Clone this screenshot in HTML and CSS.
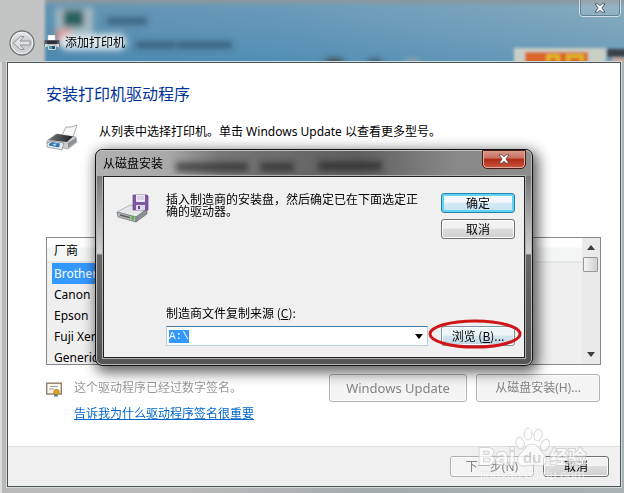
FILE: index.html
```
<!DOCTYPE html>
<html lang="zh-CN">
<head>
  <meta charset="UTF-8" />
  <meta name="viewport" content="width=device-width, initial-scale=1.0" />
  <title>添加打印机</title>
  <link rel="stylesheet" href="styles.css">
</head>
<body>
  <div class="window">
    <header class="titlebar">
      <svg class="glass" viewBox="0 0 624 62" preserveAspectRatio="none" aria-hidden="true">
        <defs>
          <linearGradient id="sky" x1="0" y1="0" x2="1" y2="0">
            <stop offset="0" stop-color="#548cb0" />
            <stop offset=".45" stop-color="#5f98bb" />
            <stop offset="1" stop-color="#89aec2" />
          </linearGradient>
          <linearGradient id="depth" x1="0" y1="0" x2="0" y2="1">
            <stop offset="0" stop-color="#8e9699" />
            <stop offset=".12" stop-color="#7ea0b4" stop-opacity=".3" />
            <stop offset="1" stop-color="#3c80ac" stop-opacity=".4" />
          </linearGradient>
          <filter id="soft" filterUnits="userSpaceOnUse" x="-20" y="-20" width="664" height="110"><feGaussianBlur stdDeviation="3" /></filter>
          <filter id="soft2" filterUnits="userSpaceOnUse" x="-20" y="-20" width="664" height="110"><feGaussianBlur stdDeviation="1.6" /></filter>
        </defs>
        <rect width="624" height="62" fill="url(#sky)" />
        <rect width="624" height="62" fill="url(#depth)" />
        <rect x="-10" y="-8" width="55" height="80" fill="#c3c4c4" filter="url(#soft2)" />
        <g filter="url(#soft)">
          <rect x="56" y="8" width="37" height="25" fill="#a9bcc4" />
          <rect x="63" y="10" width="21" height="17" fill="#28605f" />
          <rect x="56" y="30" width="16" height="14" fill="#e28d84" />
          <rect x="60" y="34" width="66" height="16" rx="7" fill="#dde8ee" />
          <path d="M107 21h40M136 45h40M178 45h54" stroke="#26475e" stroke-width="7" opacity=".65" />
          <ellipse cx="334" cy="62" rx="10" ry="4" fill="#42464a" />
          <ellipse cx="375" cy="63" rx="8" ry="4" fill="#3a5260" />
          <ellipse cx="412" cy="63" rx="8" ry="4" fill="#a0a8a8" />
        </g>
        <g filter="url(#soft2)">
          <rect x="514" y="48" width="92" height="20" fill="#c9cfc5" />
          <rect x="525" y="52" width="63" height="16" fill="#d9662c" />
          <path d="M548 62v-6h10v6M568 62v-6h14v6" fill="none" stroke="#e0b52c" stroke-width="4" />
          <rect x="607" y="49" width="20" height="8" fill="#394249" />
          <rect x="612" y="58" width="14" height="8" fill="#cfa99a" />
        </g>
      </svg>
      <button class="back" aria-label="返回">
        <svg viewBox="0 0 26 26" width="26" height="26">
          <defs>
            <linearGradient id="orb" x1="0" y1="0" x2="0" y2="1">
              <stop offset="0" stop-color="#e8e9ea" /><stop offset=".5" stop-color="#c4c6c8" /><stop offset="1" stop-color="#d6d8da" />
            </linearGradient>
          </defs>
          <circle cx="13" cy="13" r="12" fill="url(#orb)" stroke="#6f7477" stroke-width="1.3" />
          <circle cx="13" cy="13" r="10.8" fill="none" stroke="#f1f2f3" />
          <path d="M4.5 13l7-6.500h3.500l-4 4.500h10v4h-10l4 4.500h-3.500z" fill="#dfe1e3" stroke="#909598" stroke-width="1" />
        </svg>
      </button>
      <svg class="title-icon" viewBox="0 0 16 16" width="16" height="16" aria-hidden="true">
        <path d="M4 0h7v6H4z" fill="#fff" stroke="#cbd0d3" stroke-width=".6" />
        <rect x=".5" y="5" width="15" height="7" rx="1" fill="#585c60" />
        <path d="M1 9h14v3H1z" fill="#d5d8da" />
        <path d="M3 6h10v3H3z" fill="#303438" />
        <path d="M4 10h8v5H4z" fill="#fff" stroke="#70777b" stroke-width=".6" />
        <path d="M5 11h4v3H5z" fill="#3f9fbb" />
        <path d="M8 11h3v3H8z" fill="#235674" />
      </svg>
      <h1 class="title">添加打印机</h1>
      <button class="close" aria-label="关闭">
        <svg viewBox="0 0 12 10" width="12" height="10"><path d="M1 .8h3.200L6 2.800 7.800.8H11L7.900 5 11 9.200H7.800L6 7.200l-1.800 2H1L4.100 5z" fill="#fff" stroke="#4c5967" stroke-width="1" /></svg>
      </button>
    </header>

    <div class="client">
      <main class="page">
        <h2 class="heading">安装打印机驱动程序</h2>
        <div class="intro">
          <svg viewBox="0 0 32 28" width="32" height="28" aria-hidden="true">
            <defs>
              <linearGradient id="lid" x1="0" y1="0" x2="1" y2="0"><stop offset="0" stop-color="#77797b" /><stop offset="1" stop-color="#1d1f21" /></linearGradient>
            </defs>
            <path d="M16 11L20 3q5 1 11-2l-4 12-5 3z" fill="#f7f7f7" stroke="#898989" stroke-width=".7" />
            <path d="M1 17l9-7 20 3 1 5-9 7L1 20z" fill="#c9cbcc" stroke="#88898a" stroke-width=".6" />
            <path d="M2 16l9-6 16 2.500-6 5.500z" fill="url(#lid)" />
            <path d="M22 19l8-5v4l-8 6z" fill="#8c8f91" />
            <path d="M1 19l5-2 12 2-2 7-15-3z" fill="#e7e9ea" stroke="#75797c" stroke-width=".6" />
            <path d="M3 20l3-2 8 1.500-1 4-10-2z" fill="#2f75b7" />
            <path d="M6 20l5-.5-2 2.500z" fill="#a9dded" />
          </svg>
          <p>从列表中选择打印机。单击 Windows Update 以查看更多型号。</p>
        </div>

        <div class="list">
          <table class="makers">
            <thead><tr><th>厂商</th></tr></thead>
            <tbody>
              <tr class="selected"><td>Brother</td></tr>
              <tr><td>Canon</td></tr>
              <tr><td>Epson</td></tr>
              <tr><td>Fuji Xerox</td></tr>
              <tr><td>Generic</td></tr>
            </tbody>
          </table>
          <div class="scrollbar">
            <button class="arrow" aria-label="向上滚动"><svg viewBox="0 0 8 5" width="8" height="5"><path d="M4 0l4 5H0z" fill="#3b3d3f" /></svg></button>
            <div class="thumb"></div>
            <button class="arrow arrow-down" aria-label="向下滚动"><svg viewBox="0 0 8 5" width="8" height="5"><path d="M4 5l4-5H0z" fill="#3b3d3f" /></svg></button>
          </div>
        </div>

        <div class="signed">
          <svg class="cert" viewBox="0 0 16 15" width="16" height="15" aria-hidden="true">
            <rect x=".7" y="1.200" width="14.600" height="10.800" fill="#fbf8ee" stroke="#8f7d67" stroke-width="1.400" />
            <path d="M4 4.500h8M3 7h5" stroke="#9fa4aa" stroke-width="1" />
            <path d="M9 11l-1 4 2-1 2 1-1-4z" fill="#34698e" />
            <circle cx="10.500" cy="10" r="2.700" fill="#e2a51e" stroke="#a87311" stroke-width=".7" />
          </svg>
          <div class="signed-text">
            <p>这个驱动程序已经过数字签名。</p>
            <a href="#">告诉我为什么驱动程序签名很重要</a>
          </div>
          <button class="btn wide" disabled>Windows Update</button>
          <button class="btn disk" disabled>从磁盘安装(H)...</button>
        </div>
      </main>

      <footer class="footer">
        <button class="btn next" disabled>下一步(N)</button>
        <button class="btn cancel">取消</button>
      </footer>
    </div>
  </div>

  <div class="dialog" role="dialog" aria-labelledby="dialogTitle">
    <div class="dialog-bar">
      <h2 class="dialog-title" id="dialogTitle">从磁盘安装</h2>
      <svg class="ghost" viewBox="0 0 240 20" aria-hidden="true">
        <path d="M8 13h72M92 13h34M150 12h64" stroke="#222" stroke-width="9" opacity=".65" filter="url(#soft)" />
      </svg>
      <button class="dialog-close" aria-label="关闭">
        <svg viewBox="0 0 12 10" width="12" height="10"><path d="M1 .8h3.200L6 2.800 7.800.8H11L7.900 5 11 9.200H7.800L6 7.200l-1.800 2H1L4.100 5z" fill="#fff" stroke="#5f3a38" stroke-width=".8" /></svg>
      </button>
    </div>
    <div class="dialog-body">
      <div class="prompt">
        <svg viewBox="0 0 34 30" width="34" height="30" aria-hidden="true">
          <path d="M1 19l13-7 17 4-11 8z" fill="#e6e7e8" stroke="#9c9fa1" stroke-width=".7" />
          <path d="M1 19l19 5v5L2 24z" fill="#b3b6b8" stroke="#707477" stroke-width=".7" />
          <path d="M20 24l11-8v5l-11 8z" fill="#8c9092" stroke="#707477" stroke-width=".7" />
          <path d="M4 22l10 2.600" stroke="#55595c" stroke-width="1.400" />
          <path d="M15.500 23l2.500.7v3.600l-2.500-.7z" fill="#55b52c" />
          <path d="M17 2h14l1 1v14H17z" fill="#8057a4" stroke="#65408c" stroke-width=".7" />
          <path d="M20 2h9v7h-9z" fill="#ece9f4" />
          <path d="M21 4h7M21 6h7" stroke="#b6b0c6" stroke-width=".7" />
          <path d="M20 12h9v5h-9z" fill="#ddd8e6" />
          <path d="M22 13h2v3h-2z" fill="#69478e" />
        </svg>
        <p>插入制造商的安装盘，然后确定已在下面选定正确的驱动器。</p>
        <div class="actions">
          <button class="btn small default">确定</button>
          <button class="btn small">取消</button>
        </div>
      </div>
      <div class="source">
        <div class="field">
          <label for="sourcePath">制造商文件复制来源 (<u>C</u>):</label>
          <div class="combo">
            <input class="path" id="sourcePath" type="text" value="A:\">
            <button class="drop" aria-label="展开"><svg viewBox="0 0 8 5" width="8" height="5"><path d="M0 0h8L4 5z" fill="#000" /></svg></button>
          </div>
        </div>
        <div class="browse">
          <button class="btn small hot">浏览 (<u>B</u>)...</button>
          <svg class="ring" viewBox="0 0 94 30" width="94" height="30" aria-hidden="true"><ellipse cx="47" cy="15" rx="45" ry="13" fill="none" stroke="#cf1518" stroke-width="3" /></svg>
        </div>
      </div>
    </div>
  </div>

  <svg class="watermark" viewBox="0 0 120 56" width="120" height="56" role="img" aria-label="Baidu 经验">
    <g fill="#fff" stroke="#c6c6c6" stroke-width="1">
      <ellipse cx="44" cy="18" rx="4" ry="6" transform="rotate(-15 44 18)" />
      <ellipse cx="52" cy="9" rx="4" ry="6" />
      <ellipse cx="62" cy="10" rx="4" ry="6" transform="rotate(12 62 10)" />
      <ellipse cx="69" cy="20" rx="4" ry="6" transform="rotate(25 69 20)" />
      <path d="M56 19c6 0 8 7 12 10 5 5 2 13-5 12-5-1-9-1-14 0-7 1-10-7-5-12 4-3 6-10 12-10z" />
    </g>
    <g class="mark-text">
      <text x="2" y="40" font-size="24">Bai</text>
      <text class="mark-du" x="47" y="38" font-size="15">du</text>
      <text x="74" y="39" font-size="18">经验</text>
      <text class="mark-url" x="4" y="54" font-size="13">jingyan.baidu.com</text>
    </g>
  </svg>
</body>
</html>
```

FILE: styles.css
```
* {
  box-sizing: border-box;
  margin: 0;
  padding: 0;
}
body {
  min-height: 100vh;
  position: relative;
  overflow: hidden;
  background: #c6c6c6;
  color: #000;
  font-family: 'Noto Sans', 'Noto Sans CJK SC', sans-serif;
  font-size: 12px;
  line-height: 16px;
}
button, input {
  font: inherit;
  color: inherit;
}
button {
  display: flex;
  align-items: center;
  justify-content: center;
  white-space: nowrap;
}

/* outer window */
.window {
  min-height: 100vh;
  display: flex;
  flex-direction: column;
  padding: 0 3px 6px 7px;
  background: linear-gradient(90deg, #dcdcdc 0, #dcdcdc 2px, #b9b9b9 2px, #b9b9b9 30%, #a4abad 60%, #a9b2b4 100%);
}
.titlebar {
  position: relative;
  height: 62px;
  flex: none;
  display: flex;
  align-items: center;
  margin: 0 -3px 0 -7px;
  padding: 23px 0 0 9px;
}
.glass {
  position: absolute;
  inset: 0;
  width: 100%;
  height: 100%;
}
.back {
  position: relative;
  border: none;
  background: none;
}
.title-icon {
  position: relative;
  margin-left: 9px;
}
.title {
  position: relative;
  margin-left: 5px;
  font-size: 12px;
  font-weight: normal;
}
.close {
  position: absolute;
  top: -2px;
  right: 3px;
  width: 42px;
  height: 19px;
  border: 1px solid #d4e3eb;
  border-radius: 0 0 4px 4px;
  outline: 1px solid #62808f;
  outline-offset: -2px;
  background: rgba(255, 255, 255, 0.12);
}
.client {
  flex: 1;
  position: relative;
  display: flex;
  flex-direction: column;
  border: 1px solid #4d5456;
  outline: 1px solid #d4dadc;
  background: #fff;
}
.page {
  flex: 1;
  padding: 19px 19px 0 38px;
}
.heading {
  color: #003399;
  font-size: 16px;
  font-weight: normal;
  line-height: 24px;
}
.intro {
  display: flex;
  gap: 21px;
  margin-top: 18px;
}
.list {
  display: flex;
  justify-content: space-between;
  height: 128px;
  margin-top: 85px;
  overflow: hidden;
  border: 1px solid #828790;
  background: linear-gradient(#fff 9px, #f4f6f5 10px, #f4f6f5 23px, #d5d9da 24px, #efefef 25px);
}
.makers {
  width: 42%;
  height: max-content;
  margin-left: 5px;
  border-spacing: 0;
  text-align: left;
}
.makers th {
  height: 25px;
  padding-left: 2px;
  font-weight: normal;
}
.makers td {
  height: 21px;
  padding-left: 2px;
}
.selected {
  background: #3399ff;
  color: #fff;
}
.scrollbar {
  display: flex;
  flex-direction: column;
  width: 18px;
  padding: 0 2px 0 1px;
  background: #eaeaea;
}
.arrow {
  height: 19px;
  border: none;
  background: none;
}
.arrow-down {
  margin-top: auto;
}
.thumb {
  height: 15px;
  border: 1px solid #979797;
  border-radius: 1px;
  background: linear-gradient(90deg, #f5f5f5, #d0d0d2);
}
.signed {
  display: flex;
  align-items: flex-start;
  gap: 9px;
  margin-top: 9px;
  padding-right: 1px;
}
.cert {
  margin-top: 8px;
}
.signed-text {
  flex: 1;
  margin-left: 3px;
  padding-top: 6px;
}
.signed-text p {
  color: #999;
  margin-bottom: 10px;
}
.signed-text a {
  color: #0066cc;
}
.btn {
  height: 21px;
  border: 1px solid #707070;
  border-radius: 3px;
  box-shadow: inset 0 0 0 1px #fcfcfc;
  background: linear-gradient(#f2f2f2 45%, #dddddd 50%, #cfcfcf);
}
.btn:disabled {
  color: #838383;
  border-color: #adb2b5;
  background: #f4f4f4;
}
.wide {
  width: 138px;
  height: 28px;
  font-size: 13px;
}
.disk {
  width: 124px;
  height: 28px;
}
.footer {
  display: flex;
  justify-content: flex-end;
  gap: 9px;
  padding: 9px 11px 9px 0;
  border-top: 1px solid #dfdfdf;
  background: #f0f0f0;
}
.next {
  width: 84px;
}
.cancel {
  width: 66px;
}

/* install-from-disk dialog */
.dialog {
  position: absolute;
  top: 149px;
  left: 95px;
  right: 91px;
  padding: 0 7px 7px;
  border: 1px solid #111;
  border-radius: 7px;
  background: linear-gradient(#999 0, #777 12%, #aaa 32%, #d0d0d0 48%, #666 49%, #555 100%);
  box-shadow: inset 0 0 0 1px #b9b9b9, 3px 4px 14px 2px rgba(0, 0, 0, 0.65);
}
.dialog-bar {
  display: flex;
  height: 26px;
  align-items: center;
  margin: 0 -6px;
  padding-left: 6px;
  border-top: 1px solid #c4c4c4;
  border-radius: 6px 6px 0 0;
  background: linear-gradient(90deg, #b0b0b0, #aaa 16%, #777 28%, #5e5e5e 60%, #888 82%, #8d8d8d);
}
.dialog-title {
  font-size: 12px;
  font-weight: normal;
}
.ghost {
  flex: 1;
  height: 20px;
  margin-right: 70px;
}
.dialog-close {
  align-self: flex-start;
  width: 42px;
  height: 17px;
  margin-right: 6px;
  border: 1px solid #e0aaa1;
  border-top: none;
  border-radius: 0 0 4px 4px;
  outline: 1px solid #4b1c17;
  background: linear-gradient(#d79a8d 0, #c8705f 45%, #ae2a16 50%, #c85237 100%);
}
.dialog-body {
  border: 1px solid #222;
  outline: 1px solid #b0b0b0;
  background: #f0f0f0;
  padding: 16px 9px 11px 12px;
  font-family: 'Noto Sans CJK SC', sans-serif;
}
.prompt {
  display: flex;
  align-items: flex-start;
}
.prompt p {
  flex: 1;
  margin-left: 16px;
  margin-right: 20px;
  line-height: 12px;
}
.actions {
  display: grid;
  gap: 6px;
}
.small {
  width: 74px;
  height: 20px;
}
.default {
  border-color: #2c81a8;
  box-shadow: inset 0 0 0 2px #5fd2f5;
  background: linear-gradient(#f2f8fb 45%, #d5ebf6 50%, #c3e2f0);
}
.source {
  display: flex;
  align-items: flex-end;
  gap: 13px;
  margin: 66px 0 0 50px;
}
.field {
  flex: 1;
}
.field label {
  display: block;
  margin-bottom: 5px;
}
.combo {
  display: flex;
  align-items: center;
  justify-content: space-between;
  height: 20px;
  padding: 0 4px 0 2px;
  border: 1px solid #b5cfe7;
  border-top-color: #3d7bad;
  background: #fff;
}
.path {
  width: 20px;
  height: 13px;
  border: none;
  background: #3399ff;
  color: #fff;
  font-family: 'Liberation Mono', monospace;
  font-size: 11px;
}
.drop {
  border: none;
  background: none;
}
.browse {
  position: relative;
}
.hot {
  border-color: #7893a3;
  background: linear-gradient(#eef5f9 45%, #d5e6ef 50%, #bfd6e2);
}
.ring {
  position: absolute;
  top: -7px;
  left: -13px;
}

/* site mark */
.watermark {
  position: absolute;
  right: 28px;
  bottom: 12px;
  opacity: 0.7;
  pointer-events: none;
}
.mark-text {
  fill: #fff;
  stroke: #c8c8c8;
  stroke-width: 2px;
  paint-order: stroke;
  font-family: 'Liberation Sans', 'Noto Sans CJK SC', sans-serif;
  font-weight: bold;
}
.mark-du {
  fill: #c8c8c8;
  stroke: none;
}
.mark-url {
  stroke: #dcdcdc;
  stroke-width: 1px;
  font-weight: normal;
  opacity: 0.7;
}
```
